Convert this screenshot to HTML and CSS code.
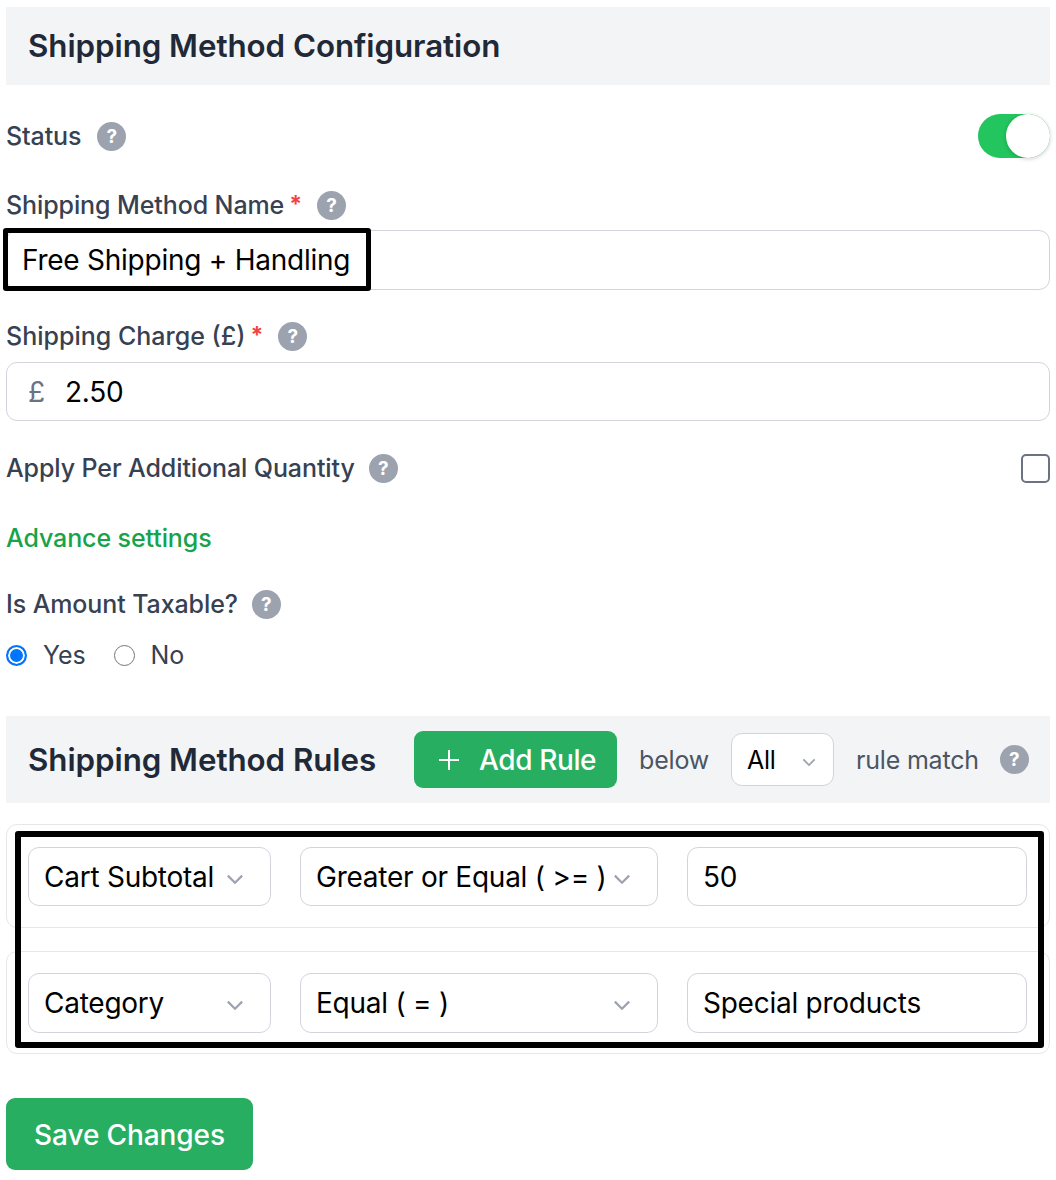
FILE: index.html
```html
<!DOCTYPE html>
<html lang="en">
<head>
    <meta charset="UTF-8">
    <title>Shipping Method Configuration</title>
    <link rel="stylesheet" href="styles.css">
</head>
<body>
    <div class="section-head">
        <h2>Shipping Method Configuration</h2>
    </div>

    <div class="row status-row">
        <span class="label">Status</span>
        <span class="help">?</span>
        <span class="toggle"><span class="knob"></span></span>
    </div>

    <div class="row name-label">
        <span class="label">Shipping Method Name</span>
        <span class="req">*</span>
        <span class="help">?</span>
    </div>
    <div class="input-wrap">
        <div class="input name-input">Free Shipping + Handling</div>
        <div class="mark mark-name"></div>
    </div>

    <div class="row charge-label">
        <span class="label">Shipping Charge (£)</span>
        <span class="req">*</span>
        <span class="help">?</span>
    </div>
    <div class="input charge-input">
        <span class="currency">£</span>
        <span>2.50</span>
    </div>

    <div class="row apply-row">
        <span class="label">Apply Per Additional Quantity</span>
        <span class="help">?</span>
        <span class="checkbox"></span>
    </div>

    <a class="advance">Advance settings</a>

    <div class="row taxable-row">
        <span class="label">Is Amount Taxable?</span>
        <span class="help">?</span>
    </div>
    <div class="radios">
        <span class="radio checked"></span>
        <span class="radio-text">Yes</span>
        <span class="radio"></span>
        <span class="radio-text">No</span>
    </div>

    <div class="section-head rules-head">
        <h2>Shipping Method Rules</h2>
        <button class="btn add-btn">
            <svg class="plus" viewBox="0 0 20 20"><path d="M10 0v20M0 10h20"/></svg>
            Add Rule
        </button>
        <span class="muted">below</span>
        <div class="select all-select">
            <span>All</span>
            <svg class="chevron small" viewBox="0 0 16 10"><path d="M1.500 1.500L8 8l6.500-6.500"/></svg>
        </div>
        <span class="muted">rule match</span>
        <span class="help">?</span>
    </div>

    <div class="rules">
        <div class="rule">
            <div class="select col-field">
                <span>Cart Subtotal</span>
                <svg class="chevron" viewBox="0 0 16 10"><path d="M1.500 1.500L8 8l6.500-6.500"/></svg>
            </div>
            <div class="select col-op">
                <span>Greater or Equal ( &gt;= )</span>
                <svg class="chevron" viewBox="0 0 16 10"><path d="M1.500 1.500L8 8l6.500-6.500"/></svg>
            </div>
            <div class="input col-value">50</div>
        </div>
        <div class="rule">
            <div class="select col-field">
                <span>Category</span>
                <svg class="chevron" viewBox="0 0 16 10"><path d="M1.500 1.500L8 8l6.500-6.500"/></svg>
            </div>
            <div class="select col-op">
                <span>Equal ( = )</span>
                <svg class="chevron" viewBox="0 0 16 10"><path d="M1.500 1.500L8 8l6.500-6.500"/></svg>
            </div>
            <div class="input col-value">Special products</div>
        </div>
        <div class="mark mark-rules"></div>
    </div>

    <button class="btn save-btn">Save Changes</button>
</body>
</html>
```

FILE: styles.css
```css
body {
    font-family: 'Inter', 'Liberation Sans', sans-serif;
    margin: 0;
    padding: 7px 6px 0;
    background-color: #fff;
    color: #374151;
    font-size: 25px;
    letter-spacing: -0.1px;
}

/* Section bars */
.section-head {
    background-color: #f3f4f6;
    height: 78px;
    padding: 0 22px;
    display: flex;
    align-items: center;
    white-space: nowrap;
}
.section-head h2 {
    margin: 0;
    font-size: 31.3px;
    font-weight: 600;
    letter-spacing: -0.05px;
    color: #1f2937;
}

/* Label rows */
.row {
    display: flex;
    align-items: center;
    height: 30px;
}
.label {
    font-weight: 500;
}
.req {
    color: #ef4444;
    font-size: 23px;
    font-weight: 700;
    margin-left: 5px;
    align-self: flex-start;
}
.help {
    width: 29px;
    height: 29px;
    border-radius: 50%;
    background-color: #9ca3af;
    color: #fff;
    font-size: 19px;
    font-weight: 700;
    display: flex;
    align-items: center;
    justify-content: center;
    margin-left: 14px;
    flex-shrink: 0;
}
.req + .help {
    margin-left: 15px;
}
.status-row {
    margin-top: 36px;
}
.status-row .help {
    margin-left: 16px;
}
.name-label {
    margin-top: 39px;
}
.charge-label {
    margin-top: 31px;
}
.charge-label .label {
    letter-spacing: 0;
}
.apply-row {
    margin-top: 32px;
}
.taxable-row {
    margin-top: 36px;
}

.toggle {
    margin-left: auto;
    width: 72px;
    height: 44px;
    border-radius: 22px;
    background-color: #22c55e;
    position: relative;
}
.knob {
    position: absolute;
    right: 0;
    top: 0;
    width: 44px;
    height: 44px;
    border-radius: 50%;
    background-color: #fff;
    box-shadow: 0 1px 4px rgba(0, 0, 0, 0.2);
}

/* Inputs */
.input {
    height: 59px;
    box-sizing: border-box;
    border: 1px solid #d1d5db;
    border-radius: 11px;
    padding: 0 15px;
    display: flex;
    align-items: center;
    color: #000;
    font-size: 28px;
    letter-spacing: -0.25px;
    background-color: #fff;
}
.input-wrap {
    position: relative;
    margin-top: 10px;
}
.name-input {
    height: 60px;
}
.charge-input {
    margin-top: 11px;
    padding-left: 21px;
}
.currency {
    color: #6b7280;
    width: 37px;
}
.checkbox {
    margin-left: auto;
    width: 29px;
    height: 29px;
    box-sizing: border-box;
    border: 2px solid #6b7280;
    border-radius: 5px;
}

.advance {
    display: block;
    margin-top: 40px;
    color: #16a34a;
    font-weight: 500;
    line-height: 30px;
}

/* Radios */
.radios {
    display: flex;
    align-items: center;
    margin-top: 21px;
    height: 30px;
}
.radio {
    width: 21px;
    height: 21px;
    box-sizing: border-box;
    border: 1.5px solid #767676;
    border-radius: 50%;
    background-color: #fff;
}
.radio.checked {
    border: 2px solid #0075ff;
    box-shadow: inset 0 0 0 2px #fff;
    background-color: #0075ff;
}
.radio-text {
    margin-left: 16px;
    margin-right: 28px;
}

/* Rules header */
.rules-head {
    margin-top: 46px;
    height: 87px;
}
.btn {
    font-family: inherit;
    border: none;
    border-radius: 9px;
    background-color: #27ae60;
    color: #fff;
    font-weight: 500;
}
.add-btn {
    margin-left: 38px;
    width: 203px;
    height: 57px;
    font-size: 28px;
    letter-spacing: -0.4px;
    display: flex;
    align-items: center;
    justify-content: center;
    gap: 20px;
    padding: 0 0 0 4px;
    flex-shrink: 0;
}
.plus {
    width: 20px;
    height: 20px;
    fill: none;
    stroke: #fff;
    stroke-width: 2;
}
.muted {
    color: #4b5563;
    margin-left: 22px;
    letter-spacing: -0.2px;
}
.rules-head .help {
    margin-left: 21px;
}

/* Selects */
.select {
    height: 59px;
    box-sizing: border-box;
    border: 1px solid #d1d5db;
    border-radius: 11px;
    padding: 0 26px 0 15px;
    display: flex;
    align-items: center;
    justify-content: space-between;
    color: #000;
    font-size: 28px;
    letter-spacing: -0.25px;
    background-color: #fff;
}
.chevron {
    width: 18px;
    height: 11px;
    margin-top: 5px;
    fill: none;
    stroke: #9ca3af;
    stroke-width: 2;
    flex-shrink: 0;
}
.chevron.small {
    width: 14px;
    height: 9px;
}
.all-select {
    margin-left: 22px;
    width: 103px;
    height: 53px;
    padding-right: 17px;
    font-size: 25px;
    flex-shrink: 0;
}

/* Rule rows */
.rules {
    position: relative;
    margin-top: 21px;
}
.rule {
    height: 104px;
    box-sizing: border-box;
    border: 1px solid #e5e7eb;
    border-radius: 11px;
    padding: 22px 22px 0 21px;
    display: flex;
    gap: 29px;
}
.rule + .rule {
    height: 103px;
    margin-top: 23px;
    padding-top: 21px;
}
.rule + .rule .select,
.rule + .rule .input {
    height: 60px;
}
.col-field {
    width: 243px;
}
.col-op {
    width: 358px;
}
.col-value {
    flex: 1;
}

.save-btn {
    display: block;
    margin-top: 44px;
    width: 247px;
    height: 72px;
    padding-top: 2px;
    font-size: 28px;
    letter-spacing: -0.1px;
}

/* Black highlight boxes on top of the form */
.mark {
    position: absolute;
    box-sizing: border-box;
    border: 5px solid #000;
    border-radius: 3px;
    pointer-events: none;
}
.mark-name {
    left: -3px;
    top: -2px;
    width: 368px;
    height: 63px;
}
.mark-rules {
    left: 9px;
    top: 7px;
    width: 1029px;
    height: 217px;
    border-width: 6px;
}
```
